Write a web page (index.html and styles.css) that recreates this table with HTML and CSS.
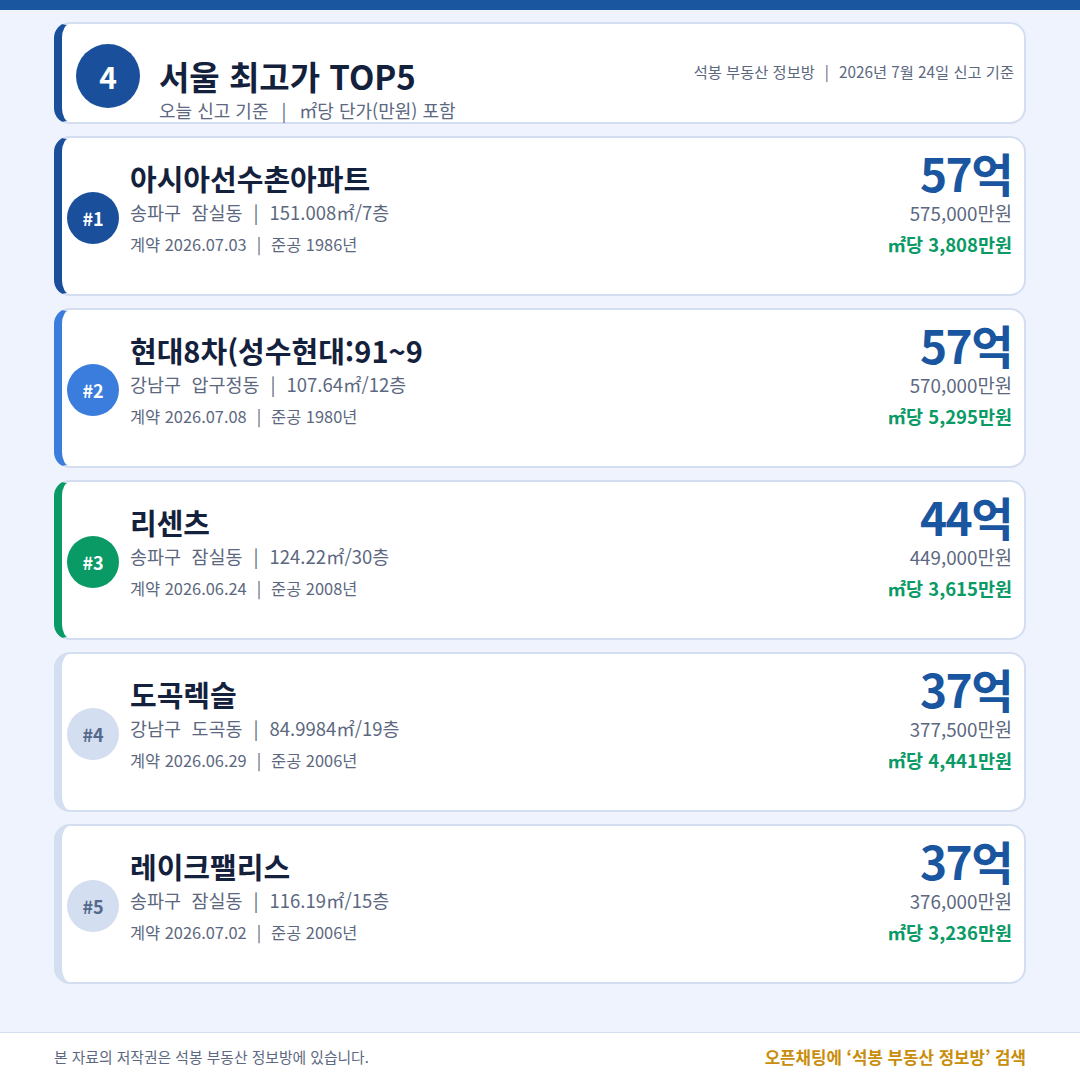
FILE: index.html
```html
<!DOCTYPE html>
<html lang="ko">
<head>
<meta charset="utf-8">
<link rel="stylesheet" href="styles.css">
</head>
<body>
<div class="topbar"></div>
<main class="wrap">
  <section class="head card">
    <div class="head-num">4</div>
    <div class="head-text">
      <h1>서울 최고가 TOP5</h1>
      <p class="head-sub">오늘 신고 기준<span class="sep">|</span>㎡당 단가(만원) 포함</p>
    </div>
    <div class="head-meta">석봉 부동산 정보방<span class="sep">|</span>2026년 7월 24일 신고 기준</div>
  </section>

  <section class="card item r1">
    <div class="rank">#1</div>
    <div class="info">
      <h2>아시아선수촌아파트</h2>
      <p class="l2">송파구&nbsp; 잠실동<span class="sep">|</span>151.008㎡/7층</p>
      <p class="l3">계약 2026.07.03<span class="sep">|</span>준공 1986년</p>
    </div>
    <div class="price">
      <div class="big">57억</div>
      <div class="man">575,000만원</div>
      <div class="unit">㎡당 3,808만원</div>
    </div>
  </section>

  <section class="card item r2">
    <div class="rank">#2</div>
    <div class="info">
      <h2>현대8차(성수현대:91~9</h2>
      <p class="l2">강남구&nbsp; 압구정동<span class="sep">|</span>107.64㎡/12층</p>
      <p class="l3">계약 2026.07.08<span class="sep">|</span>준공 1980년</p>
    </div>
    <div class="price">
      <div class="big">57억</div>
      <div class="man">570,000만원</div>
      <div class="unit">㎡당 5,295만원</div>
    </div>
  </section>

  <section class="card item r3">
    <div class="rank">#3</div>
    <div class="info">
      <h2>리센츠</h2>
      <p class="l2">송파구&nbsp; 잠실동<span class="sep">|</span>124.22㎡/30층</p>
      <p class="l3">계약 2026.06.24<span class="sep">|</span>준공 2008년</p>
    </div>
    <div class="price">
      <div class="big">44억</div>
      <div class="man">449,000만원</div>
      <div class="unit">㎡당 3,615만원</div>
    </div>
  </section>

  <section class="card item r4">
    <div class="rank">#4</div>
    <div class="info">
      <h2>도곡렉슬</h2>
      <p class="l2">강남구&nbsp; 도곡동<span class="sep">|</span>84.9984㎡/19층</p>
      <p class="l3">계약 2026.06.29<span class="sep">|</span>준공 2006년</p>
    </div>
    <div class="price">
      <div class="big">37억</div>
      <div class="man">377,500만원</div>
      <div class="unit">㎡당 4,441만원</div>
    </div>
  </section>

  <section class="card item r4">
    <div class="rank">#5</div>
    <div class="info">
      <h2>레이크팰리스</h2>
      <p class="l2">송파구&nbsp; 잠실동<span class="sep">|</span>116.19㎡/15층</p>
      <p class="l3">계약 2026.07.02<span class="sep">|</span>준공 2006년</p>
    </div>
    <div class="price">
      <div class="big">37억</div>
      <div class="man">376,000만원</div>
      <div class="unit">㎡당 3,236만원</div>
    </div>
  </section>
</main>
<footer class="foot">
  <span class="copy">본 자료의 저작권은 석봉 부동산 정보방에 있습니다.</span>
  <span class="cta">오픈채팅에 ‘석봉 부동산 정보방’ 검색</span>
</footer>
</body>
</html>
```

FILE: styles.css
```css
* { box-sizing: border-box; margin: 0; padding: 0; }
html, body { width: 1080px; height: 1080px; overflow: hidden; }
body {
  background: #eef3fd;
  font-family: "Noto Sans CJK KR", "Noto Sans", sans-serif;
  color: #14213d;
  display: flex;
  flex-direction: column;
}
.topbar { height: 10px; background: #1a56a0; flex: none; }
.wrap {
  flex: 1;
  padding: 12px 54px 0 54px;
  display: flex;
  flex-direction: column;
  gap: 12px;
}
.card {
  background: #fff;
  border: 2px solid #d3def0;
  border-left: 8px solid #1a4f9c;
  border-radius: 16px;
}
.sep {
  display: inline-block;
  color: #5c6880;
}
.head {
  height: 102px;
  flex: none;
  display: flex;
  align-items: flex-start;
  padding: 0 10px 0 14px;
}
.head-num {
  width: 64px; height: 64px; border-radius: 50%;
  background: #1a4f9c; color: #fff;
  display: flex; align-items: center; justify-content: center;
  font-size: 30px; font-weight: 700;
  margin-top: 20px;
  flex: none;
}
.head-text { margin-left: 19px; flex: 1; }
.head-text h1 { font-size: 33px; font-weight: 700; line-height: 40px; margin-top: 32px; color: #14213d; }
.head-sub { font-size: 18px; color: #5c6880; line-height: 22px; margin-top: 3px; }
.head-sub .sep { margin: 0 13px; }
.head-meta { font-size: 15.3px; color: #5c6880; margin-top: 36px; line-height: 22px; }
.head-meta .sep { margin: 0 10px; }

.item {
  height: 160px;
  flex: none;
  display: flex;
  align-items: flex-start;
  padding: 20px 12px 0 5px;
}
.rank {
  width: 52px; height: 52px; border-radius: 50%;
  background: #1a4f9c; color: #fff;
  display: flex; align-items: center; justify-content: center;
  font-size: 18px; font-weight: 700;
  margin-top: 34px;
  flex: none;
}
.info { flex: 1; margin-left: 11px; }
.info h2 { font-size: 29px; font-weight: 700; line-height: 40px; color: #14213d; }
.l2 { font-size: 18.5px; color: #5c6880; line-height: 26px; margin-top: 1px; }
.l2 .sep { margin: 0 11px; }
.l3 { font-size: 16.4px; color: #5c6880; line-height: 26px; margin-top: 6px; }
.l3 .sep { margin: 0 10px; }
.price { text-align: right; }
.big { font-size: 46px; font-weight: 700; color: #1a56a0; line-height: 44px; margin-top: -8px; letter-spacing: -1.5px; }
.man { font-size: 18.8px; color: #5c6880; line-height: 26px; margin-top: 6px; }
.unit { font-size: 18.5px; font-weight: 700; color: #0a9a66; line-height: 26px; margin-top: 5px; }

.r2 { border-left-color: #3a7ddc; }
.r2 .rank { background: #3a7ddc; }
.r3 { border-left-color: #0a9a66; }
.r3 .rank { background: #0a9a66; }
.r4 { border-left-color: #d3def0; }
.r4 .rank { background: #d3def0; color: #55698c; }

.foot {
  flex: none;
  height: 48px;
  background: #fff;
  border-top: 1px solid #d3def0;
  display: flex;
  align-items: center;
  justify-content: space-between;
  padding: 0 54px;
}
.copy { font-size: 14.8px; color: #5c6880; }
.cta { font-size: 16.8px; font-weight: 700; color: #c98d0c; }
```
